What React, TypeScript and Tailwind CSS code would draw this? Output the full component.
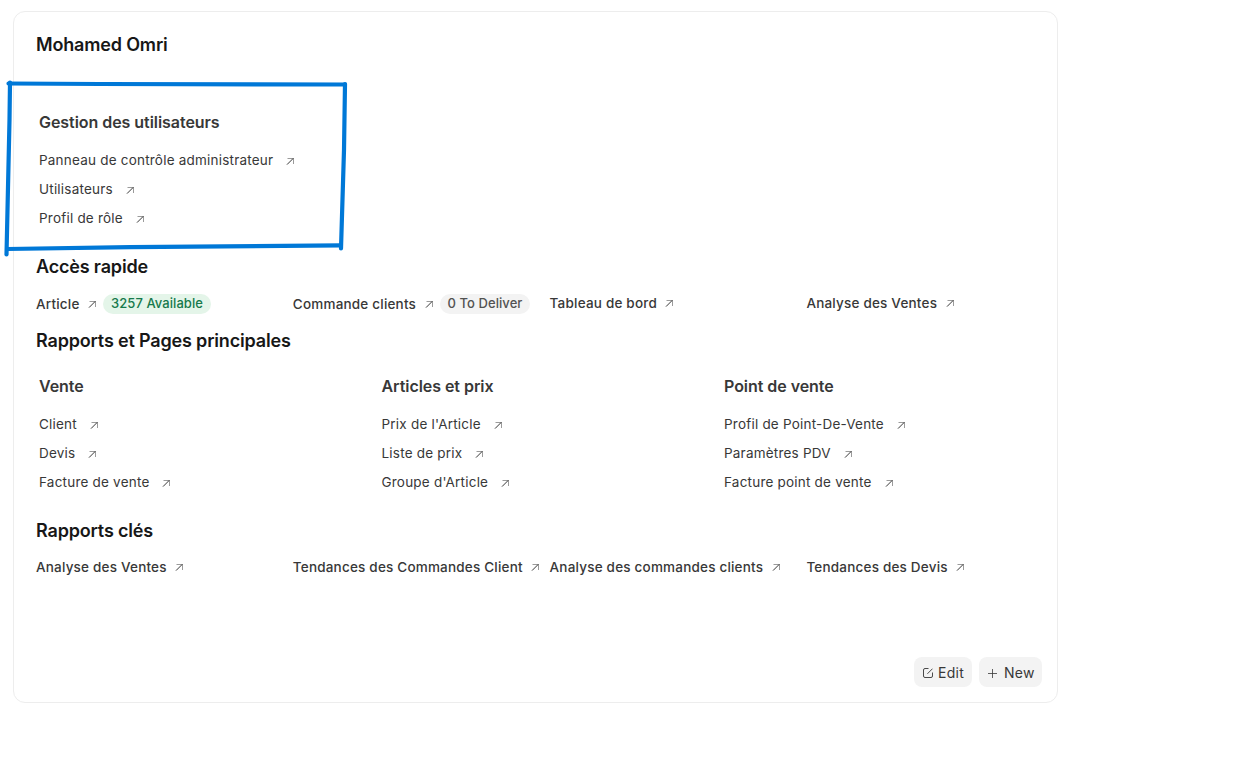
type LinkItem = { label: string; pill?: { text: string; tone: "green" | "gray" } };

function Arrow({ className }: { className: string }) {
  return (
    <svg className={`h-2 w-2 shrink-0 ${className}`} viewBox="0 0 8 8" fill="none" stroke="#383838">
      <path d="M1.5 1.5H7.5V7" strokeWidth="1" strokeOpacity="0.5" />
      <path d="M7.3 1.3L1 7.6" strokeWidth="1" />
    </svg>
  );
}

function Heading({ children, className }: { children: string; className: string }) {
  return (
    <h2 className={`flex h-[30px] items-center text-lg font-semibold tracking-[-0.17px] text-[#171717] ${className}`}>
      {children}
    </h2>
  );
}

function LinkCard({ title, links }: { title: string; links: string[] }) {
  return (
    <section className="w-[342.5px] shrink-0 pl-[3px]">
      <h3 className="flex h-6 items-center text-base font-semibold tracking-[-0.05px] text-[#383838]">{title}</h3>
      <ul className="mt-3">
        {links.map((label) => (
          <li key={label} className="flex h-[29px] items-center text-[13.5px] tracking-[0.21px] whitespace-nowrap text-[#383838]">
            {label}
            <Arrow className="ml-[13px]" />
          </li>
        ))}
      </ul>
    </section>
  );
}

function Shortcuts({ items }: { items: LinkItem[] }) {
  return (
    <div className="mt-3 flex h-5">
      {items.map(({ label, pill }) => (
        <div
          key={label}
          className={`flex w-[256.8px] shrink-0 items-center text-[13.5px] font-[460] tracking-[0.2px] whitespace-nowrap text-[#383838] ${
            pill ? "" : "pb-0.5"
          }`}
        >
          {label}
          <Arrow className="ml-[8.5px]" />
          {pill && (
            <span
              className={`ml-[7px] flex h-5 items-center rounded-full px-2 text-[13px] tracking-[0.06px] ${
                pill.tone === "green" ? "bg-[#e4f5e9] text-[#16794c]" : "bg-[#f3f3f3] text-[#525252]"
              }`}
            >
              {pill.text}
            </span>
          )}
        </div>
      ))}
    </div>
  );
}

export default function App() {
  return (
    <main className="relative h-[781px] w-[1244px] overflow-hidden bg-white pt-[11px] pl-[13px] font-['Inter',sans-serif]">
      <div className="flex h-[692px] w-[1045px] flex-col rounded-xl border border-[#ededed] pt-[18px] pl-[22px]">
        <Heading className="">Mohamed Omri</Heading>
        <div className="mt-[50px] flex">
          <LinkCard
            title="Gestion des utilisateurs"
            links={["Panneau de contrôle administrateur", "Utilisateurs", "Profil de rôle"]}
          />
        </div>
        <Heading className="mt-[19px]">Accès rapide</Heading>
        <Shortcuts
          items={[
            { label: "Article", pill: { text: "3257 Available", tone: "green" } },
            { label: "Commande clients", pill: { text: "0 To Deliver", tone: "gray" } },
            { label: "Tableau de bord" },
            { label: "Analyse des Ventes" },
          ]}
        />
        <Heading className="mt-3">Rapports et Pages principales</Heading>
        <div className="mt-[18px] flex">
          <LinkCard title="Vente" links={["Client", "Devis", "Facture de vente"]} />
          <LinkCard title="Articles et prix" links={["Prix de l'Article", "Liste de prix", "Groupe d'Article"]} />
          <LinkCard title="Point de vente" links={["Profil de Point-De-Vente", "Paramètres PDV", "Facture point de vente"]} />
        </div>
        <Heading className="mt-[19px]">Rapports clés</Heading>
        <Shortcuts
          items={[
            { label: "Analyse des Ventes" },
            { label: "Tendances des Commandes Client" },
            { label: "Analyse des commandes clients" },
            { label: "Tendances des Devis" },
          ]}
        />
        <div className="mt-[79px] flex justify-end gap-[7px] pr-[15px]">
          <button className="flex h-[30px] w-[58px] items-center rounded-lg bg-[#f3f3f3] pt-0.5 pl-[9px] text-sm tracking-[0.02em] text-[#383838]">
            <svg className="mr-[5px] h-2.5 w-2.5" viewBox="0 0 10 10" fill="none" stroke="#383838" strokeWidth="0.9">
              <path d="M5.5 0.5H2A1.5 1.5 0 0 0 0.5 2V8A1.5 1.5 0 0 0 2 9.5H8A1.5 1.5 0 0 0 9.5 8V4.5" />
              <path d="M9.5 0.7L4.4 5.8" />
            </svg>
            Edit
          </button>
          <button className="flex h-[30px] w-[63px] items-center rounded-lg bg-[#f3f3f3] pt-0.5 pl-[9px] text-sm tracking-[0.02em] text-[#383838]">
            <svg className="mr-[7px] h-[9px] w-[9px]" viewBox="0 0 9 9" fill="none" stroke="#383838" strokeWidth="0.8">
              <path d="M4.5 0V9M0 4.5H9" />
            </svg>
            New
          </button>
        </div>
      </div>
      <svg className="pointer-events-none absolute top-0 left-0 h-[270px] w-[360px]" viewBox="0 0 360 270" fill="none" stroke="#0078d7" strokeWidth="4.2" strokeLinecap="round">
        <path d="M8.5 83.5L100 84L345 84.5" />
        <path d="M10 82.5L9.5 120L6.5 254.5" />
        <path d="M345 84L344 150L341 248.5" />
        <path d="M7 249L130 247.2L341 245.3" />
      </svg>
    </main>
  );
}
